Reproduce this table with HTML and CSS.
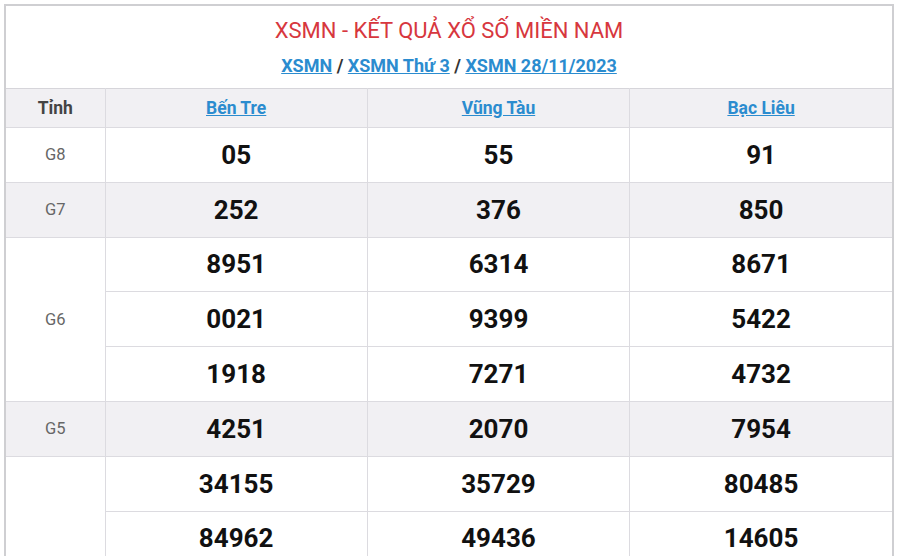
FILE: index.html
```html
<!DOCTYPE html>
<html lang="vi">
<head>
<meta charset="utf-8">
<title>XSMN</title>
<link rel="stylesheet" href="styles.css">
</head>
<body>
<div class="card">
  <div class="head">
    <h1 class="title">XSMN - KẾT QUẢ XỔ SỐ MIỀN NAM</h1>
    <div class="crumbs"><a href="#">XSMN</a> / <a href="#">XSMN Thứ 3</a> / <a href="#">XSMN 28/11/2023</a></div>
  </div>
  <table class="res">
    <colgroup><col class="c0"><col><col><col></colgroup>
    <thead>
      <tr class="gray"><th class="lbl-h">Tỉnh</th><th><a href="#">Bến Tre</a></th><th><a href="#">Vũng Tàu</a></th><th><a href="#">Bạc Liêu</a></th></tr>
    </thead>
    <tbody>
      <tr><td class="lbl">G8</td><td>05</td><td>55</td><td>91</td></tr>
      <tr class="gray"><td class="lbl">G7</td><td>252</td><td>376</td><td>850</td></tr>
      <tr><td class="lbl" rowspan="3">G6</td><td>8951</td><td>6314</td><td>8671</td></tr>
      <tr><td>0021</td><td>9399</td><td>5422</td></tr>
      <tr><td>1918</td><td>7271</td><td>4732</td></tr>
      <tr class="gray"><td class="lbl">G5</td><td>4251</td><td>2070</td><td>7954</td></tr>
      <tr><td class="lbl" rowspan="2"></td><td>34155</td><td>35729</td><td>80485</td></tr>
      <tr><td>84962</td><td>49436</td><td>14605</td></tr>
    </tbody>
  </table>
</div>
</body>
</html>
```
FILE: styles.css
```css
html, body { margin: 0; padding: 0; background: #fff; }
body { font-family: Roboto, "Liberation Sans", Arial, sans-serif; overflow: hidden; height: 556px; }
.card {
  margin: 4px 6px 0 4px;
  border: 2px solid #cfcfd2;
  border-bottom: none;
  background: #fff;
}
.head { height: 82px; text-align: center; }
.title {
  margin: 0;
  padding-top: 11px;
  font-size: 22px;
  line-height: 28px;
  font-weight: 400;
  color: #d7373e;
}
.crumbs {
  margin-top: 10px;
  font-size: 18px;
  line-height: 22px;
  font-weight: 700;
  color: #333;
}
.crumbs a, .res th a { color: #2b8ccf; text-decoration: underline; }
.res { width: 100%; border-collapse: collapse; table-layout: fixed; }
.res col.c0 { width: 99px; }
.res th, .res td {
  border: 1px solid #dcdbe0;
  text-align: center;
  padding: 0;
}
.res tr > :first-child { border-left: none; }
.res tr > :last-child { border-right: none; }
.res thead tr:first-child th { border-top-color: #d6d5da; }
.res th { height: 38px; font-size: 17.5px; font-weight: 700; color: #3a3a3a; }
.res th.lbl-h { color: #444; }
.res td { height: 53.8px; font-size: 26px; font-weight: 700; color: #111; }
.res td.lbl { font-size: 16.5px; font-weight: 400; color: #666; }
.gray th, .gray td { background: #f1f0f3; }
```
